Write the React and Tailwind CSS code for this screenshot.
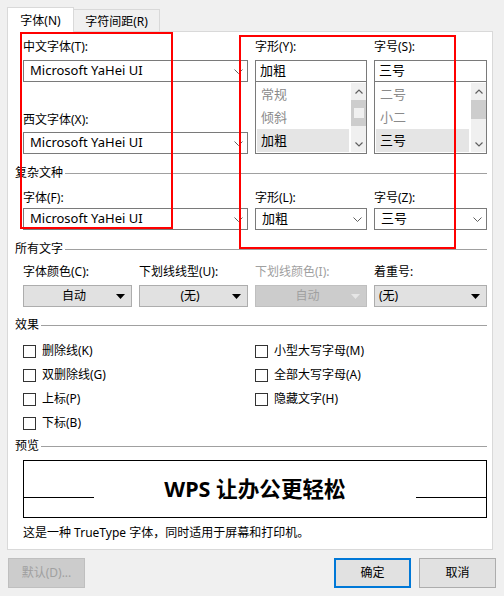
import React from 'react';

const font = "font-['Noto_Sans','Noto_Sans_CJK_SC',sans-serif]";

function Chevron({ className = '' }) {
  return (
    <svg width="9" height="5" viewBox="0 0 9 5" className={className}>
      <polyline points="0.5,0.5 4.5,4.5 8.5,0.5" fill="none" stroke="#606060" strokeWidth="1" />
    </svg>
  );
}

function Triangle({ color = '#000' }) {
  return (
    <svg width="9" height="5" viewBox="0 0 9 5">
      <polygon points="0,0 9,0 4.5,5" fill={color} />
    </svg>
  );
}

function Combo({ value, w }) {
  return (
    <div className={`${w} h-[22px] border border-[#7a7a7a] bg-white flex items-center pl-[6px] pr-[4px] text-[13px] text-black`}>
      <span className="flex-1">{value}</span>
      <Chevron />
    </div>
  );
}

function Label({ children, gray }) {
  return <div className={`h-[16px] leading-[16px] text-[12px] ${gray ? 'text-[#a0a0a0]' : 'text-black'}`}>{children}</div>;
}

function Section({ title, className = '' }) {
  return (
    <div className={`ml-[-8px] w-[472px] h-[16px] flex items-center gap-[2px] ${className}`}>
      <span className="text-[12px] leading-[16px] text-black">{title}</span>
      <div className="flex-1 h-px bg-[#a0a0a0]" />
    </div>
  );
}

function ListBox({ items, selected, thumbInner }) {
  return (
    <div className="h-[72px] border border-[#7a7a7a] border-t-0 bg-white flex pt-px pl-px pb-px">
      <div className="flex-1 flex flex-col">
        {items.map((it) => (
          <div
            key={it}
            className={`h-[23px] leading-[23px] pl-[4px] text-[13px] mr-[2px] ${it === selected ? 'bg-[#e5e5e5] text-black' : 'text-[#8a8a8a]'}`}
          >
            {it}
          </div>
        ))}
      </div>
      <div className="w-[15px] bg-[#f0f0f0] flex flex-col items-center">
        <div className="h-[17px] flex items-center justify-center">
          <svg width="8" height="5" viewBox="0 0 8 5">
            <polyline points="0.5,4.5 4,1 7.5,4.5" fill="none" stroke="#606060" strokeWidth="1.2" />
          </svg>
        </div>
        <div className={`w-[15px] ${thumbInner ? 'h-[26px]' : 'h-[19px]'} bg-[#cdcdcd] flex items-center justify-center`}>
          {thumbInner && <div className="w-[10px] h-[10px] bg-[#f0f0f0]" />}
        </div>
        <div className="flex-1" />
        <div className="h-[15px] flex items-center justify-center">
          <svg width="8" height="5" viewBox="0 0 8 5">
            <polyline points="0.5,0.5 4,4 7.5,0.5" fill="none" stroke="#606060" strokeWidth="1.2" />
          </svg>
        </div>
      </div>
    </div>
  );
}

function DropButton({ value, w, align = 'center', disabled }) {
  return (
    <div
      className={`${w} h-[22px] border flex items-center pr-[6px] text-[12px] ${
        disabled ? 'bg-[#cccccc] border-[#bfbfbf] text-[#a0a0a0]' : 'bg-[#e1e1e1] border-[#adadad] text-black'
      }`}
    >
      <span className={`flex-1 ${align === 'center' ? 'text-center pl-[8px]' : 'pl-[4px]'}`}>{value}</span>
      <Triangle color={disabled ? '#e6e6e6' : '#000'} />
    </div>
  );
}

function Check({ label }) {
  return (
    <div className="h-[24px] flex items-center gap-[6px]">
      <div className="w-[13px] h-[13px] border border-[#333333] bg-white" />
      <span className="text-[12px] text-black">{label}</span>
    </div>
  );
}

export default function App() {
  return (
    <div className={`relative w-[504px] h-[596px] bg-[#f0f0f0] overflow-hidden ${font}`}>
      {/* Tabs */}
      <div className="h-[32px] pl-[7px] flex items-end">
        <div className="relative z-10 w-[67px] h-[25px] pt-px bg-white border border-b-0 border-[#d9d9d9] flex items-center justify-center text-[12px] text-black">
          字体(N)
        </div>
        <div className="w-[86px] h-[23px] pt-px border-t border-r border-[#d9d9d9] flex items-center justify-center text-[12px] text-black">
          字符间距(R)
        </div>
      </div>

      {/* Panel */}
      <div className="mt-[-1px] ml-[7px] w-[486px] h-[519px] bg-white border border-[#d9d9d9] pl-[15px]">
        <div className="flex gap-[7px] pt-[7px]">
          <div className="w-[225px] flex flex-col">
            <Label>中文字体(T):</Label>
            <div className="mt-[5px]"><Combo value="Microsoft YaHei UI" w="w-[225px]" /></div>
            <div className="mt-[30px]"><Label>西文字体(X):</Label></div>
            <div className="mt-[4px]"><Combo value="Microsoft YaHei UI" w="w-[225px]" /></div>
          </div>
          <div className="w-[112px] flex flex-col">
            <Label>字形(Y):</Label>
            <div className="mt-[5px] h-[22px] border border-[#7a7a7a] flex items-center pl-[4px] text-[13px]">加粗</div>
            <ListBox items={['常规', '倾斜', '加粗']} selected="加粗" thumbInner />
          </div>
          <div className="w-[113px] flex flex-col">
            <Label>字号(S):</Label>
            <div className="mt-[5px] h-[22px] border border-[#7a7a7a] flex items-center pl-[4px] text-[13px]">三号</div>
            <ListBox items={['二号', '小二', '三号']} selected="三号" />
          </div>
        </div>

        <Section title="复杂文种" className="mt-[11px]" />
        <div className="flex gap-[7px] mt-[9px]">
          <div className="w-[225px]">
            <Label>字体(F):</Label>
            <div className="mt-[2px]"><Combo value="Microsoft YaHei UI" w="w-[225px]" /></div>
          </div>
          <div className="w-[112px]">
            <Label>字形(L):</Label>
            <div className="mt-[2px]"><Combo value="加粗" w="w-[112px]" /></div>
          </div>
          <div className="w-[113px]">
            <Label>字号(Z):</Label>
            <div className="mt-[2px]"><Combo value="三号" w="w-[113px]" /></div>
          </div>
        </div>

        <Section title="所有文字" className="mt-[11px]" />
        <div className="flex gap-[7px] mt-[7px]">
          <div className="w-[109px]">
            <Label>字体颜色(C):</Label>
            <div className="mt-[5px]"><DropButton value="自动" w="w-[109px]" /></div>
          </div>
          <div className="w-[109px]">
            <Label>下划线线型(U):</Label>
            <div className="mt-[5px]"><DropButton value="(无)" w="w-[109px]" /></div>
          </div>
          <div className="w-[112px]">
            <Label gray>下划线颜色(I):</Label>
            <div className="mt-[5px]"><DropButton value="自动" w="w-[112px]" disabled /></div>
          </div>
          <div className="w-[113px]">
            <Label>着重号:</Label>
            <div className="mt-[5px]"><DropButton value="(无)" w="w-[113px]" align="left" /></div>
          </div>
        </div>

        <Section title="效果" className="mt-[10px]" />
        <div className="flex mt-[6px]">
          <div className="w-[232px] flex flex-col">
            <Check label="删除线(K)" />
            <Check label="双删除线(G)" />
            <Check label="上标(P)" />
            <Check label="下标(B)" />
          </div>
          <div className="flex flex-col">
            <Check label="小型大写字母(M)" />
            <Check label="全部大写字母(A)" />
            <Check label="隐藏文字(H)" />
          </div>
        </div>

        <Section title="预览" className="mt-[3px]" />
        <div className="mt-[6px] w-[464px] h-[58px] border border-black flex items-center">
          <div className="w-[70px] h-px bg-black mt-[17px]" />
          <div className="flex-1 text-center text-[21.6px] font-bold text-black">WPS 让办公更轻松</div>
          <div className="w-[70px] h-px bg-black mt-[17px]" />
        </div>
        <div className="mt-[7px] h-[16px] leading-[16px] text-[12px] text-black">这是一种 TrueType 字体，同时适用于屏幕和打印机。</div>
      </div>

      {/* Bottom buttons */}
      <div className="mt-[8px] px-[8px] flex items-center">
        <div className="w-[77px] h-[30px] bg-[#cccccc] border border-[#bfbfbf] flex items-center justify-center text-[12px] text-[#a0a0a0]">
          默认(D)...
        </div>
        <div className="flex-1" />
        <div className="w-[77px] h-[30px] bg-[#e1e1e1] border-2 border-[#0078d7] flex items-center justify-center text-[12px] text-black">
          确定
        </div>
        <div className="ml-[8px] w-[77px] h-[30px] bg-[#e1e1e1] border border-[#adadad] flex items-center justify-center text-[12px] text-black">
          取消
        </div>
      </div>

      {/* Red annotation rectangles */}
      <div className="absolute left-[20px] top-[32px] w-[153px] h-[197px] border-2 border-[#ff0000] pointer-events-none" />
      <div className="absolute left-[239px] top-[35px] w-[217px] h-[214px] border-2 border-[#ff0000] pointer-events-none" />
    </div>
  );
}
